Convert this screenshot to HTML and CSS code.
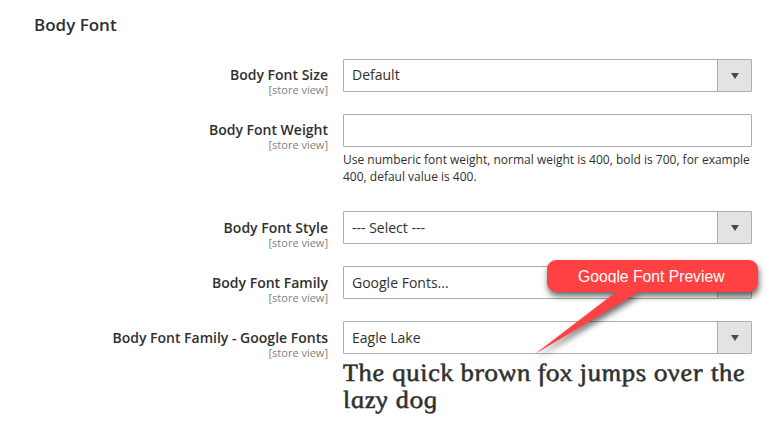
FILE: index.html
```
<!DOCTYPE html>
<html lang="en">
<head>
<meta charset="utf-8">
<title>Body Font</title>
<link rel="stylesheet" href="styles.css">
</head>
<body>
<main class="section">
  <h1 class="title">Body Font</h1>
  <div class="row">
    <div class="label"><span class="name">Body Font Size</span><span class="scope">[store view]</span></div>
    <div class="value"><div class="control"><span class="text">Default</span><span class="toggle"><svg class="arrow" viewBox="0 0 8 6"><path d="M0 0h8L4 6z"/></svg></span></div></div>
  </div>
  <div class="row row-note">
    <div class="label"><span class="name">Body Font Weight</span><span class="scope">[store view]</span></div>
    <div class="value"><div class="control"></div><p class="note"><span class="note-line">Use numberic font weight, normal weight is 400, bold is 700, for example</span> <span class="note-line">400, defaul value is 400.</span></p></div>
  </div>
  <div class="row row-low">
    <div class="label"><span class="name">Body Font Style</span><span class="scope">[store view]</span></div>
    <div class="value"><div class="control"><span class="text">--- Select ---</span><span class="toggle"><svg class="arrow" viewBox="0 0 8 6"><path d="M0 0h8L4 6z"/></svg></span></div></div>
  </div>
  <div class="row row-low">
    <div class="label"><span class="name">Body Font Family</span><span class="scope">[store view]</span></div>
    <div class="value"><div class="control"><span class="text">Google Fonts...</span><span class="toggle"><svg class="arrow" viewBox="0 0 8 6"><path d="M0 0h8L4 6z"/></svg></span></div></div>
  </div>
  <div class="row row-low">
    <div class="label"><span class="name">Body Font Family - Google Fonts</span><span class="scope">[store view]</span></div>
    <div class="value"><div class="control"><span class="text">Eagle Lake</span><span class="toggle"><svg class="arrow" viewBox="0 0 8 6"><path d="M0 0h8L4 6z"/></svg></span></div>
      <div class="preview"><span class="preview-line">The quick brown fox jumps over the</span><span class="preview-line">lazy dog</span></div>
    </div>
  </div>
</main>
<div class="callout">
  <svg class="bubble" viewBox="0 0 240 110"><path d="M20 5H213A9 9 0 0 1 222 14V28A9 9 0 0 1 213 37H103L-1 99L80 37H20A9 9 0 0 1 11 28V14A9 9 0 0 1 20 5Z"/></svg>
  <span class="callout-text">Google Font Preview</span>
</div>
</body>
</html>
```
FILE: styles.css
```
* { box-sizing: border-box; }
body {
  margin: 0;
  width: 770px;
  height: 421px;
  overflow: hidden;
  position: relative;
  background: #fff;
  color: #303030;
  font-family: "Open Sans", "Noto Sans", sans-serif;
}
.section { padding: 13px 18px 0 0; }
.title {
  margin: 0 0 22px 34px;
  font-size: 17px;
  line-height: 24px;
  font-weight: 600;
}
.row {
  display: grid;
  grid-template-columns: 328px 409px;
  column-gap: 15px;
  height: 55px;
}
.row-note { height: 97px; }
.label {
  display: flex;
  flex-direction: column;
  align-items: flex-end;
  padding-top: 7px;
  white-space: nowrap;
}
.row-low .label { padding-top: 8px; }
.name { font-size: 14px; line-height: 18px; font-weight: 600; }
.scope { font-size: 11px; line-height: 12px; color: #808080; }
.control {
  display: flex;
  justify-content: space-between;
  height: 33px;
  border: 1px solid #adadad;
  border-radius: 1px;
  background: #fff;
}
.text { padding-left: 8px; font-size: 14px; line-height: 30px; }
.row-low .text { line-height: 32px; }
.toggle {
  display: flex;
  align-items: center;
  justify-content: center;
  width: 34px;
  border-left: 1px solid #adadad;
  background: #e3e3e3;
}
.arrow { width: 8px; height: 6px; margin: 1px 0 0 1px; fill: #514943; }
.note { margin: 4px 0 0; font-size: 12px; line-height: 17px; }
.note-line { display: block; white-space: nowrap; }
.preview {
  margin-top: 5px;
  font-family: "Liberation Serif", serif;
  font-size: 25px;
  font-style: italic;
  line-height: 27px;
  -webkit-text-stroke: 0.5px #303030;
}
.preview-line {
  display: block;
  width: max-content;
  white-space: nowrap;
  transform-origin: 0 60%;
  transform: scaleX(1.08) skewX(10deg);
  letter-spacing: 0.45px;
}
.callout { position: absolute; left: 536px; top: 255px; width: 234px; height: 115px; }
.bubble {
  display: block;
  width: 240px;
  height: 110px;
  overflow: visible;
  fill: #ff4144;
  filter: drop-shadow(1px 4px 3px rgba(0, 0, 0, 0.6));
}
.callout-text {
  position: absolute;
  left: 42px;
  top: 13px;
  height: 15px;
  overflow: hidden;
  color: #fff;
  font: 15.7px/17px "Liberation Sans", sans-serif;
  white-space: nowrap;
}
```
